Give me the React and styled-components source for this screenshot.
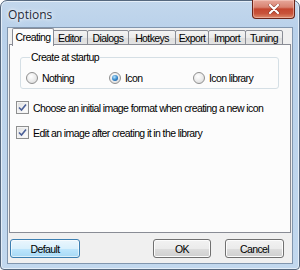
import React from "react";
import styled, { createGlobalStyle } from "styled-components";

const Global = createGlobalStyle`
  html, body { margin: 0; padding: 0; background: #ffffff; }
  * { box-sizing: border-box; }
  body { font-family: "Liberation Sans", Arial, sans-serif; font-size: 10.5px; letter-spacing: -0.6px; color: #000; white-space: nowrap; }
`;

const Window = styled.div`
  width: 300px;
  height: 270px;
  border: 1px solid #56687e;
  border-radius: 7px 7px 4px 4px;
  background: linear-gradient(to bottom, #c3d7ec 0px, #b9d1ea 30px, #c2d8ee 100%);
  box-shadow: inset 0 0 0 1px #e4eef8;
  padding: 0 6px 5px 6px;
  display: flex;
  flex-direction: column;
`;

const TitleBar = styled.div`
  height: 26px;
  display: flex;
  align-items: flex-start;
  justify-content: space-between;
`;

const Title = styled.div`
  font-family: "Open Sans", "Noto Sans", sans-serif;
  font-size: 12px;
  letter-spacing: 0;
  color: #1f2a38;
  padding: 5px 0 0 1px;
  text-shadow: 0 0 6px #ffffff, 0 0 3px #ffffff;
`;

const CloseButton = styled.div`
  width: 43px;
  height: 19px;
  margin-top: -1px;
  margin-right: -2px;
  border: 1px solid #6b2418;
  border-top: none;
  border-radius: 0 0 4px 4px;
  background: linear-gradient(to bottom, #e7a89b 0%, #d88270 40%, #c4462f 50%, #c8533a 75%, #dd8b6c 100%);
  box-shadow: inset 0 0 0 1px rgba(255, 220, 210, 0.45);
  display: flex;
  align-items: center;
  justify-content: center;
`;

const Client = styled.div`
  flex: 1;
  background: #f0f0f0;
  border: 1px solid #8196ae;
  display: flex;
  flex-direction: column;
  padding: 0 1px;
`;

const TabRow = styled.div`
  display: flex;
  align-items: flex-end;
  height: 17px;
  padding-left: 3px;
  position: relative;
  z-index: 1;
`;

const Tab = styled.div`
  width: ${(p) => p.$w}px;
  height: ${(p) => (p.$active ? 18 : 15)}px;
  margin-right: ${(p) => (p.$active ? -1 : 0)}px;
  margin-bottom: ${(p) => (p.$active ? -1 : 0)}px;
  margin-left: ${(p) => (p.$first ? 0 : -1)}px;
  border: 1px solid #898c95;
  border-bottom: ${(p) => (p.$active ? "none" : "1px solid #898c95")};
  border-radius: 2px 2px 0 0;
  background: ${(p) =>
    p.$active ? "#fcfcfc" : "linear-gradient(to bottom, #f3f3f3 0%, #ebebeb 50%, #dddddd 51%, #e4e4e4 100%)"};
  display: flex;
  justify-content: center;
  padding-top: ${(p) => (p.$active ? 2 : 1)}px;
  color: #000;
  position: relative;
  z-index: ${(p) => (p.$active ? 2 : 1)};
`;

const Panel = styled.div`
  height: 189px;
  margin-top: -1px;
  background: #fcfcfc;
  border: 1px solid #898c95;
  padding: 6px 10px 0 6px;
  display: flex;
  flex-direction: column;
`;

const Group = styled.fieldset`
  margin: 0 1px 0 4px;
  padding: 9px 0 0 5px;
  height: 38px;
  border: 1px solid #d5dfe5;
  border-radius: 3px;
  display: flex;
  align-items: flex-start;
  min-width: 0;
`;

const Legend = styled.legend`
  padding: 0 1px;
  margin-left: 4px;
  color: #000;
`;

const RadioItem = styled.label`
  display: flex;
  align-items: center;
  gap: 4px;
  width: ${(p) => p.$w}px;
`;

const RadioCircle = styled.span`
  width: 12px;
  height: 12px;
  border-radius: 50%;
  border: 1px solid #8f8f8f;
  background: radial-gradient(circle at 40% 35%, #ffffff 0%, #e8e8e8 60%, #d0d0d0 100%);
  display: flex;
  align-items: center;
  justify-content: center;
  flex: none;
`;

const RadioDot = styled.span`
  width: 6px;
  height: 6px;
  border-radius: 50%;
  background: radial-gradient(circle at 40% 35%, #b9e4fb 0%, #2f83c8 55%, #1b4a8a 100%);
`;

const CheckRow = styled.label`
  display: flex;
  align-items: center;
  gap: 4px;
  margin-top: ${(p) => p.$mt}px;
`;

const CheckBox = styled.span`
  width: 13px;
  height: 13px;
  border: 1px solid #8e8f8f;
  background: linear-gradient(135deg, #dcdcdc 0%, #f4f4f4 60%, #ffffff 100%);
  box-shadow: inset 0 0 0 1px #f4f4f4;
  display: flex;
  align-items: center;
  justify-content: center;
  flex: none;
`;

const ButtonRow = styled.div`
  display: flex;
  align-items: center;
  padding: 6px 7px 0 1px;
`;

const Button = styled.div`
  width: ${(p) => p.$w}px;
  height: 19px;
  margin-left: ${(p) => p.$ml || 0}px;
  border: 1px solid ${(p) => (p.$focus ? "#3c7fb1" : "#707070")};
  border-radius: 3px;
  background: ${(p) =>
    p.$focus
      ? "linear-gradient(to bottom, #eaf6fd 0%, #d9f0fc 50%, #bee6fd 51%, #a7d9f5 100%)"
      : "linear-gradient(to bottom, #f2f2f2 0%, #ebebeb 50%, #dddddd 51%, #cfcfcf 100%)"};
  box-shadow: inset 0 0 0 1px ${(p) => (p.$focus ? "rgba(255,255,255,0.6)" : "#fcfcfc")};
  display: flex;
  align-items: center;
  justify-content: center;
  color: #000;
`;

const Spacer = styled.div`
  flex: 1;
`;

const tabs = [
  { label: "Creating", w: 42, active: true },
  { label: "Editor", w: 36 },
  { label: "Dialogs", w: 42 },
  { label: "Hotkeys", w: 48 },
  { label: "Export", w: 34 },
  { label: "Import", w: 38 },
  { label: "Tuning", w: 38 },
];

const Check = () => (
  <svg width="9" height="9" viewBox="0 0 9 9">
    <path d="M1 4.5 L3.5 7 L8 1.5" fill="none" stroke="#4a5f97" strokeWidth="1.6" />
  </svg>
);

export default function App() {
  return (
    <>
      <Global />
      <Window>
        <TitleBar>
          <Title>Options</Title>
          <CloseButton>
            <svg width="12" height="10" viewBox="0 0 12 10">
              <path d="M2 1 L10 9 M10 1 L2 9" stroke="#5a1a10" strokeWidth="3.2" strokeLinecap="round" opacity="0.5" />
              <path d="M2 1 L10 9 M10 1 L2 9" stroke="#ffffff" strokeWidth="2.2" strokeLinecap="round" />
            </svg>
          </CloseButton>
        </TitleBar>
        <Client>
          <TabRow>
            {tabs.map((t, i) => (
              <Tab key={t.label} $w={t.w} $active={t.active} $first={i === 0}>
                {t.label}
              </Tab>
            ))}
          </TabRow>
          <Panel>
            <Group>
              <Legend>Create at startup</Legend>
              <RadioItem $w={83}>
                <RadioCircle />
                Nothing
              </RadioItem>
              <RadioItem $w={84}>
                <RadioCircle>
                  <RadioDot />
                </RadioCircle>
                Icon
              </RadioItem>
              <RadioItem $w={70}>
                <RadioCircle />
                Icon library
              </RadioItem>
            </Group>
            <CheckRow $mt={12}>
              <CheckBox>
                <Check />
              </CheckBox>
              Choose an initial image format when creating a new icon
            </CheckRow>
            <CheckRow $mt={12}>
              <CheckBox>
                <Check />
              </CheckBox>
              Edit an image after creating it in the library
            </CheckRow>
          </Panel>
          <ButtonRow>
            <Button $w={70} $focus>
              Default
            </Button>
            <Spacer />
            <Button $w={58}>OK</Button>
            <Button $w={59} $ml={14}>
              Cancel
            </Button>
          </ButtonRow>
        </Client>
      </Window>
    </>
  );
}
